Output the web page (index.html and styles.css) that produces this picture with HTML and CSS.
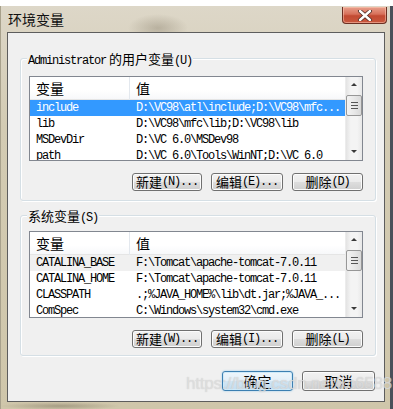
FILE: index.html
```html
<!DOCTYPE html>
<html lang="zh-CN">
  <head>
    <meta charset="UTF-8" />
    <meta name="viewport" content="width=device-width, initial-scale=1.0" />
    <title>环境变量</title>
    <link rel="stylesheet" href="styles.css">
  </head>
  <body>
    <div class="window">
      <div class="titlebar">
        <span class="title">环境变量</span>
        <div class="close">
          <svg width="18" height="11" viewBox="0 0 18 11">
            <path d="M4 1 L14 10 M14 1 L4 10" stroke="#4a2a24" stroke-width="4" stroke-linecap="round" />
            <path d="M4 1 L14 10 M14 1 L4 10" stroke="#ffffff" stroke-width="2.4" stroke-linecap="round" />
          </svg>
        </div>
      </div>

      <div class="client">
        <div class="group user">
          <div class="group-label"><span class="mono">Administrator</span> 的用户变量<span class="mono">(U)</span></div>

          <div class="list">
            <div class="list-body">
              <div class="list-head">
                <div class="cell name">变量</div>
                <div class="cell value">值</div>
              </div>
              <div class="row selected">
                <div class="cell name mono">include</div>
                <div class="cell value mono">D:\VC98\atl\include;D:\VC98\mfc...</div>
              </div>
              <div class="row">
                <div class="cell name mono">lib</div>
                <div class="cell value mono">D:\VC98\mfc\lib;D:\VC98\lib</div>
              </div>
              <div class="row">
                <div class="cell name mono">MSDevDir</div>
                <div class="cell value mono">D:\VC 6.0\MSDev98</div>
              </div>
              <div class="row">
                <div class="cell name mono">path</div>
                <div class="cell value mono">D:\VC 6.0\Tools\WinNT;D:\VC 6.0</div>
              </div>
            </div>
            <div class="scrollbar">
              <div class="arrow up"></div>
              <div class="thumb"><span></span><span></span><span></span></div>
              <div class="track"></div>
              <div class="arrow down"></div>
            </div>
          </div>

          <div class="buttons">
            <button class="btn w70">新建<span class="mono">(N)...</span></button>
            <button class="btn w72">编辑<span class="mono">(E)...</span></button>
            <button class="btn w71">删除<span class="mono">(D)</span></button>
          </div>
        </div>

        <div class="group system">
          <div class="group-label">系统变量<span class="mono">(S)</span></div>

          <div class="list">
            <div class="list-body">
              <div class="list-head">
                <div class="cell name">变量</div>
                <div class="cell value">值</div>
              </div>
              <div class="row inactive">
                <div class="cell name mono">CATALINA_BASE</div>
                <div class="cell value mono">F:\Tomcat\apache-tomcat-7.0.11</div>
              </div>
              <div class="row">
                <div class="cell name mono">CATALINA_HOME</div>
                <div class="cell value mono">F:\Tomcat\apache-tomcat-7.0.11</div>
              </div>
              <div class="row">
                <div class="cell name mono">CLASSPATH</div>
                <div class="cell value mono">.;%JAVA_HOME%\lib\dt.jar;%JAVA_...</div>
              </div>
              <div class="row">
                <div class="cell name mono">ComSpec</div>
                <div class="cell value mono">C:\Windows\system32\cmd.exe</div>
              </div>
            </div>
            <div class="scrollbar">
              <div class="arrow up"></div>
              <div class="thumb"><span></span><span></span><span></span></div>
              <div class="track"></div>
              <div class="arrow down"></div>
            </div>
          </div>

          <div class="buttons">
            <button class="btn w70">新建<span class="mono">(W)...</span></button>
            <button class="btn w72">编辑<span class="mono">(I)...</span></button>
            <button class="btn w71">删除<span class="mono">(L)</span></button>
          </div>
        </div>

        <div class="dialog-buttons">
          <button class="btn default">确定</button>
          <button class="btn cancel">取消</button>
        </div>
      </div>

      <div class="watermark">https://blog.csdn.net/xc6588</div>
    </div>
  </body>
</html>
```

FILE: styles.css
```css
html,
body {
  margin: 0;
  padding: 0;
}

body {
  background: #ffffff;
  width: 393px;
  height: 409px;
  overflow: hidden;
  font-family: "Noto Sans CJK SC", sans-serif;
  color: #000;
}

.mono {
  font-family: "Liberation Mono", "DejaVu Sans Mono", monospace;
  font-size: 12px;
  letter-spacing: -1.2px;
}

.window {
  position: relative;
  margin-top: 6px;
  height: 403px;
  box-sizing: border-box;
  padding: 0 8px 7px 7px;
  background:
    radial-gradient(ellipse 30px 14px at 158px 22px, rgba(120, 110, 90, 0.35), transparent),
    radial-gradient(ellipse 60px 4px at 60px 400px, rgba(90, 80, 60, 0.35), transparent),
    linear-gradient(180deg, #ddd7c8 0%, #d3cbb3 30%, #cfc6aa 100%);
  box-shadow: inset -3px 0 0 #4a505a, inset 1px 0 0 #a8a18c;
}

.titlebar {
  height: 26px;
  display: flex;
  justify-content: space-between;
  align-items: flex-start;
}

.title {
  margin-left: 1px;
  margin-top: 4px;
  font-size: 14px;
  line-height: 18px;
  color: #111;
}

.close {
  width: 45px;
  height: 17px;
  margin-top: 1px;
  margin-right: -2px;
  box-sizing: border-box;
  border: 1px solid #6b2f22;
  border-top: none;
  border-radius: 0 0 4px 4px;
  background: linear-gradient(180deg, #e8a08c 0%, #d7705a 45%, #c24a32 55%, #c9583e 100%);
  box-shadow: inset 0 0 0 1px rgba(255, 210, 190, 0.5);
  display: flex;
  justify-content: center;
  align-items: center;
}

.client {
  height: 370px;
  box-sizing: border-box;
  border: 1px solid #5d5d5d;
  background: #f0f0f0;
  display: flex;
  flex-direction: column;
}

.group {
  margin: 0 8px 0 12px;
  border: 1px solid #d5dfe5;
  border-radius: 3px;
  box-shadow: inset 1px 1px 0 #ffffff, 1px 1px 0 #ffffff;
  display: flex;
  flex-direction: column;
}

.group.user {
  margin-top: 25px;
  height: 143px;
  box-sizing: border-box;
}

.group.system {
  margin-top: 14px;
  height: 141px;
  box-sizing: border-box;
}

.group-label {
  margin: -8px 0 0 6px;
  padding: 0 1px;
  width: fit-content;
  background: #f0f0f0;
  font-size: 13px;
  line-height: 15px;
}

.group-label .mono {
  font-size: 12px;
}

.list {
  margin-left: 8px;
  width: 334px;
  box-sizing: border-box;
  border: 1px solid #828790;
  background: #ffffff;
  display: flex;
  overflow: hidden;
}

.user .list {
  margin-top: 7px;
  height: 85px;
}

.system .list {
  margin-top: 5px;
  height: 87px;
}

.list-body {
  flex: 1;
  overflow: hidden;
}

.list-head {
  display: flex;
  height: 23px;
  align-items: center;
  background: linear-gradient(180deg, #ffffff 0%, #ffffff 60%, #f7f8fa 100%);
  border-bottom: 1px solid #e5e5e5;
  box-sizing: border-box;
  font-size: 14px;
}

.list-head .cell.name {
  border-right: 1px solid #e3e8ee;
  height: 23px;
  line-height: 23px;
}

.row {
  display: flex;
  height: 16px;
  line-height: 16px;
  align-items: center;
  white-space: nowrap;
}

.row.selected {
  background: #3399ff;
  color: #fff;
}

.row.inactive {
  background: #f0f0f0;
}

.cell.name {
  width: 100px;
  box-sizing: border-box;
  padding-left: 6px;
  flex-shrink: 0;
}

.cell.value {
  padding-left: 6px;
  white-space: nowrap;
}

.scrollbar {
  width: 16px;
  flex-shrink: 0;
  display: flex;
  flex-direction: column;
  background: linear-gradient(90deg, #e3e3e3 0%, #f4f4f4 30%, #f4f4f4 70%, #e8e8e8 100%);
  border-left: 1px solid #ececec;
}

.arrow {
  height: 17px;
  position: relative;
}

.arrow::after {
  content: "";
  position: absolute;
  left: 5px;
  width: 0;
  height: 0;
  border-left: 3px solid transparent;
  border-right: 3px solid transparent;
}

.arrow.up::after {
  top: 6px;
  border-bottom: 3px solid #3a3a3a;
}

.arrow.down::after {
  top: 7px;
  border-top: 3px solid #3a3a3a;
}

.thumb {
  height: 21px;
  margin: 1px 0 0 0;
  box-sizing: border-box;
  border: 1px solid #979797;
  border-radius: 2px;
  background: linear-gradient(90deg, #f3f3f3 0%, #e8e8e8 50%, #d9d9d9 100%);
  display: flex;
  flex-direction: column;
  justify-content: center;
  align-items: center;
  gap: 2px;
}

.thumb span {
  width: 7px;
  height: 1px;
  background: #555;
}

.track {
  flex: 1;
}

.buttons {
  display: flex;
  justify-content: flex-end;
  gap: 9px;
  margin-right: 12px;
}

.user .buttons {
  margin-top: 12px;
}

.system .buttons {
  margin-top: 12px;
}

.btn {
  height: 18px;
  padding: 0;
  box-sizing: border-box;
  border: 1px solid #707070;
  border-radius: 3px;
  background: linear-gradient(180deg, #f2f2f2 0%, #ebebeb 48%, #dddddd 52%, #cfcfcf 100%);
  box-shadow: inset 0 0 0 1px #fcfcfc;
  font-family: "Noto Sans CJK SC", sans-serif;
  font-size: 13px;
  line-height: 16px;
  color: #000;
  display: flex;
  justify-content: center;
  align-items: center;
}

.w70 {
  width: 70px;
}

.w72 {
  width: 72px;
}

.w71 {
  width: 71px;
}

.dialog-buttons {
  display: flex;
  justify-content: flex-end;
  gap: 9px;
  margin: 15px 9px 0 0;
}

.dialog-buttons .btn {
  height: 20px;
  font-size: 14px;
}

.btn.default {
  width: 71px;
  border-color: #3c7fb1;
  background: linear-gradient(180deg, #eef6fb 0%, #e3eff8 48%, #d2e6f4 52%, #c4def1 100%);
  box-shadow: inset 0 0 0 1px #cfeaf9, 0 0 2px #8ec6ea;
}

.btn.cancel {
  width: 73px;
}

.watermark {
  position: absolute;
  left: 186px;
  top: 368px;
  font-family: "Liberation Sans", sans-serif;
  font-size: 17px;
  color: rgba(228, 228, 228, 0.7);
  text-shadow: 0 0 1px rgba(150, 150, 150, 0.45);
  letter-spacing: -0.2px;
  pointer-events: none;
}
```
